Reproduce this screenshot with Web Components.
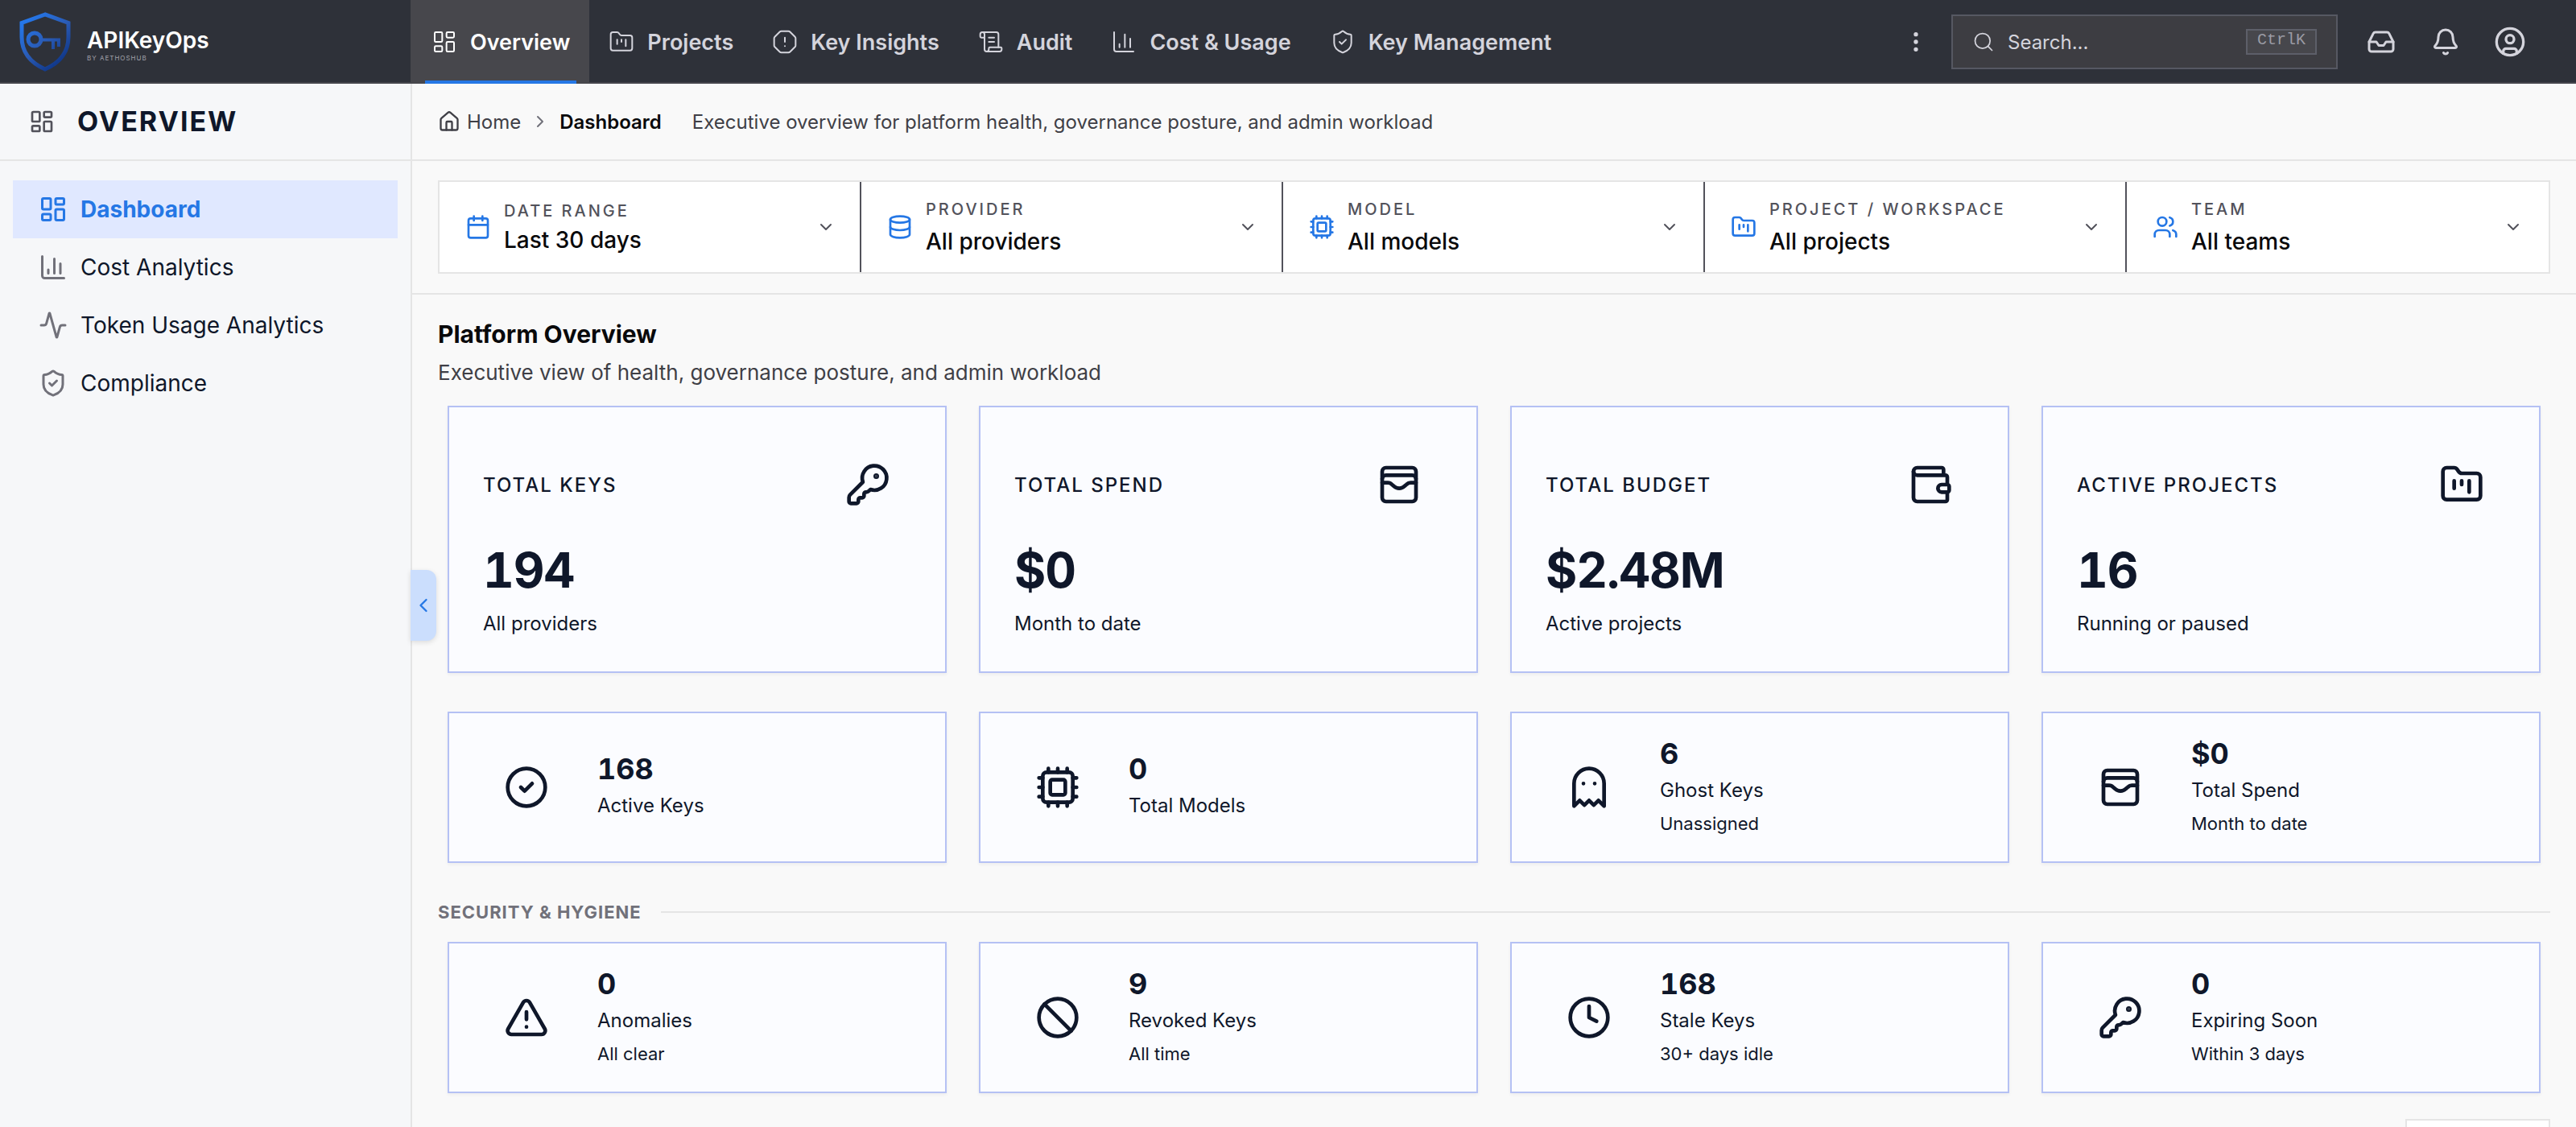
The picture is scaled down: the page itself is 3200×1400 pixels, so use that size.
<!DOCTYPE html>
<html lang="en">
<head>
<meta charset="utf-8">
<title>APIKeyOps - Overview</title>
<style>
  :root {
    --blue: #2577e5;
    --ink: #0f172a;
    --line: #e5e5e5;
    --muted: #71717a;
    --text: #3f3f46;
  }
  body {
    margin: 0;
    height: 100vh;
    overflow: hidden;
    background: #f9f9f9;
    color: var(--ink);
    font-family: Inter, "Liberation Sans", sans-serif;
    font-size: 24px;
  }
</style>
</head>
<body>
<ops-app></ops-app>

<script>
const ICONS = {
  dashboard: '<rect width="7" height="9" x="3" y="3" rx="1"/><rect width="7" height="5" x="14" y="3" rx="1"/><rect width="7" height="9" x="14" y="12" rx="1"/><rect width="7" height="5" x="3" y="16" rx="1"/>',
  folder: '<path d="M4 20h16a2 2 0 0 0 2-2V8a2 2 0 0 0-2-2h-7.93a2 2 0 0 1-1.66-.9l-.82-1.2A2 2 0 0 0 7.93 3H4a2 2 0 0 0-2 2v13c0 1.1.9 2 2 2Z"/><path d="M8 10v4M12 10v2M16 10v6"/>',
  octagon: '<path d="M12 16h.01M12 8v4"/><path d="M15.312 2a2 2 0 0 1 1.414.586l4.688 4.688A2 2 0 0 1 22 8.688v6.624a2 2 0 0 1-.586 1.414l-4.688 4.688a2 2 0 0 1-1.414.586H8.688a2 2 0 0 1-1.414-.586l-4.688-4.688A2 2 0 0 1 2 15.312V8.688a2 2 0 0 1 .586-1.414l4.688-4.688A2 2 0 0 1 8.688 2z"/>',
  scroll: '<path d="M15 12h-5M15 8h-5M19 17V5a2 2 0 0 0-2-2H4"/><path d="M8 21h12a2 2 0 0 0 2-2v-1a1 1 0 0 0-1-1H11a1 1 0 0 0-1 1v1a2 2 0 1 1-4 0V5a2 2 0 1 0-4 0v2a1 1 0 0 0 1 1h3"/>',
  chart: '<path d="M3 3v16a2 2 0 0 0 2 2h16M18 17V9M13 17V5M8 17v-3"/>',
  shield: '<path d="M20 13c0 5-3.5 7.5-7.66 8.95a1 1 0 0 1-.67-.01C7.5 20.5 4 18 4 13V6a1 1 0 0 1 1-1c2 0 4.5-1.2 6.24-2.72a1.17 1.17 0 0 1 1.52 0C14.51 3.81 17 5 19 5a1 1 0 0 1 1 1z"/><path d="m9 12 2 2 4-4"/>',
  activity: '<path d="M22 12h-2.48a2 2 0 0 0-1.93 1.46l-2.35 8.36a.25.25 0 0 1-.48 0L9.24 2.18a.25.25 0 0 0-.48 0l-2.35 8.38A2 2 0 0 1 4.49 12H2"/>',
  dots: '<circle cx="12" cy="12" r="1"/><circle cx="12" cy="5" r="1"/><circle cx="12" cy="19" r="1"/>',
  search: '<circle cx="11" cy="11" r="8"/><path d="m21 21-4.34-4.34"/>',
  inbox: '<path d="M22 12h-6l-2 3h-4l-2-3H2"/><path d="M5.45 5.11 2 12v6a2 2 0 0 0 2 2h16a2 2 0 0 0 2-2v-6l-3.45-6.89A2 2 0 0 0 16.76 4H7.24a2 2 0 0 0-1.79 1.11z"/>',
  bell: '<path d="M10.268 21a2 2 0 0 0 3.464 0"/><path d="M3.262 15.326A1 1 0 0 0 4 17h16a1 1 0 0 0 .74-1.673C19.41 13.956 18 12.499 18 8A6 6 0 0 0 6 8c0 4.499-1.411 5.956-2.738 7.326"/>',
  user: '<circle cx="12" cy="12" r="10"/><circle cx="12" cy="10" r="3"/><path d="M7 20.662V19a2 2 0 0 1 2-2h6a2 2 0 0 1 2 2v1.662"/>',
  home: '<path d="M15 21v-8a1 1 0 0 0-1-1h-4a1 1 0 0 0-1 1v8"/><path d="M3 10a2 2 0 0 1 .709-1.528l7-5.999a2 2 0 0 1 2.582 0l7 5.999A2 2 0 0 1 21 10v9a2 2 0 0 1-2 2H5a2 2 0 0 1-2-2z"/>',
  right: '<path d="m9 18 6-6-6-6"/>',
  left: '<path d="m15 18-6-6 6-6"/>',
  down: '<path d="m6 9 6 6 6-6"/>',
  calendar: '<path d="M8 2v4M16 2v4M3 10h18"/><rect width="18" height="18" x="3" y="4" rx="2"/>',
  database: '<ellipse cx="12" cy="5" rx="9" ry="3"/><path d="M3 5V19A9 3 0 0 0 21 19V5"/><path d="M3 12A9 3 0 0 0 21 12"/>',
  cpu: '<path d="M12 20v2M12 2v2M17 20v2M17 2v2M2 12h2M2 17h2M2 7h2M20 12h2M20 17h2M20 7h2M7 20v2M7 2v2"/><rect x="4" y="4" width="16" height="16" rx="2"/><rect x="8" y="8" width="8" height="8" rx="1"/>',
  users: '<path d="M16 21v-2a4 4 0 0 0-4-4H6a4 4 0 0 0-4 4v2M16 3.128a4 4 0 0 1 0 7.744M22 21v-2a4 4 0 0 0-3-3.87"/><circle cx="9" cy="7" r="4"/>',
  key: '<path d="M2.586 17.414A2 2 0 0 0 2 18.828V21a1 1 0 0 0 1 1h3a1 1 0 0 0 1-1v-1a1 1 0 0 1 1-1h1a1 1 0 0 0 1-1v-1a1 1 0 0 1 1-1h.172a2 2 0 0 0 1.414-.586l.814-.814a6.5 6.5 0 1 0-4-4z"/><circle cx="16.5" cy="7.5" r=".5" fill="currentColor"/>',
  cards: '<rect width="18" height="18" x="3" y="3" rx="2"/><path d="M3 9a2 2 0 0 1 2-2h14a2 2 0 0 1 2 2"/><path d="M3 11h3c.8 0 1.6.3 2.1.9l1.1.9c1.6 1.6 4.1 1.6 5.7 0l1.1-.9c.5-.5 1.3-.9 2.1-.9H21"/>',
  wallet: '<path d="M19 7V4a1 1 0 0 0-1-1H5a2 2 0 0 0 0 4h15a1 1 0 0 1 1 1v4h-3a2 2 0 0 0 0 4h3a1 1 0 0 0 1-1v-2a1 1 0 0 0-1-1"/><path d="M3 5v14a2 2 0 0 0 2 2h15a1 1 0 0 0 1-1v-4"/>',
  check: '<circle cx="12" cy="12" r="10"/><path d="m9 12 2 2 4-4"/>',
  ghost: '<path d="M9 10h.01M15 10h.01"/><path d="M12 2a8 8 0 0 0-8 8v12l3-3 2.5 2.5L12 19l2.5 2.5L17 19l3 3V10a8 8 0 0 0-8-8z"/>',
  alert: '<path d="m21.73 18-8-14a2 2 0 0 0-3.48 0l-8 14A2 2 0 0 0 4 21h16a2 2 0 0 0 1.73-3"/><path d="M12 9v4M12 17h.01"/>',
  ban: '<circle cx="12" cy="12" r="10"/><path d="m4.9 4.9 14.2 14.2"/>',
  clock: '<circle cx="12" cy="12" r="10"/><path d="M12 6v6l4 2"/>',
};

// Base class: renders html() into an open shadow root
class OpsElement extends HTMLElement {
  connectedCallback() {
    if (this.shadowRoot) return;
    this.attachShadow({ mode: "open" }).innerHTML = this.html();
  }

  attr(name, fallback = "") {
    return this.getAttribute(name) ?? fallback;
  }
}

class OpsIcon extends OpsElement {
  html() {
    const size = this.attr("size", "32");
    return `
      <style>
        :host { display: inline-flex; flex-shrink: 0; }
        svg { display: block; }
      </style>
      <svg width="${size}" height="${size}" viewBox="0 0 24 24" fill="none" stroke="currentColor"
        stroke-width="${this.attr("stroke", "2")}" stroke-linecap="round" stroke-linejoin="round"
        aria-hidden="true">${ICONS[this.attr("name")]}</svg>
    `;
  }
}

class OpsBrand extends OpsElement {
  html() {
    return `
      <style>
        :host {
          display: flex;
          align-items: center;
          box-sizing: border-box;
          width: 512px;
          padding-left: 24px;
          gap: 20px;
          border-right: 2px solid #47474c;
          flex-shrink: 0;
        }
        .words { padding-top: 8px; }
        .name { color: #fff; font-size: 28px; font-weight: 600; line-height: 32px; }
        .by { color: #a1a1aa; font-size: 8px; line-height: 12px; letter-spacing: 1px; }
      </style>
      <svg width="64" height="74" viewBox="0 0 64 74" fill="none" aria-hidden="true">
        <defs>
          <linearGradient id="g" x1="0" y1="0" x2="64" y2="74" gradientUnits="userSpaceOnUse">
            <stop offset="0.1" stop-color="#2479ee"/>
            <stop offset="0.5" stop-color="#2a5bb5"/>
            <stop offset="0.8" stop-color="#123a8c"/>
          </linearGradient>
        </defs>
        <g stroke="url(#g)" stroke-width="5">
          <path d="M32 3 3 13.500V31c0 20 11 32 29 40 18-8 29-20 29-40V13.500Z"/>
          <circle cx="19" cy="34" r="8"/>
          <path d="M27 34.500H51M42 34v12M49 34v9" stroke-width="4"/>
        </g>
      </svg>
      <div class="words">
        <div class="name">APIKeyOps</div>
        <div class="by">BY AETHOSHUB</div>
      </div>
    `;
  }
}

class OpsNavItem extends OpsElement {
  html() {
    return `
      <style>
        :host { display: flex; }
        a {
          position: relative;
          display: flex;
          align-items: center;
          gap: 16px;
          padding: 0 24px;
          color: #d4d4dc;
          font-size: 27px;
          font-weight: 600;
          text-decoration: none;
          white-space: nowrap;
        }
        :host([active]) a { background: #47474c; color: #fff; }
        :host([active]) a::after {
          content: "";
          position: absolute;
          left: 16px;
          right: 16px;
          bottom: 0;
          height: 4px;
          background: var(--blue);
        }
      </style>
      <a href="#"><ops-icon name="${this.attr("icon")}" stroke="1.5"></ops-icon><slot></slot></a>
    `;
  }
}

class OpsHeader extends OpsElement {
  html() {
    return `
      <style>
        :host {
          display: flex;
          height: 104px;
          background: #2e3139;
          box-shadow: inset 0 -2px #45454c;
          color: #d4d4dc;
        }
        nav { display: flex; flex: 1; }
        .tools { display: flex; align-items: center; gap: 12px; padding-right: 48px; }
        .tools button {
          display: flex;
          align-items: center;
          justify-content: center;
          width: 68px;
          height: 68px;
          padding: 0;
          border: 0;
          background: none;
          color: inherit;
        }
        .tools .more { width: 64px; }
        .search {
          display: flex;
          align-items: center;
          box-sizing: border-box;
          width: 480px;
          height: 68px;
          gap: 16px;
          padding: 0 24px;
          margin-right: 8px;
          background: #3d3d42;
          border: 2px solid #565862;
        }
        input {
          flex: 1;
          min-width: 0;
          padding: 0;
          border: 0;
          outline: 0;
          background: none;
          color: inherit;
          font: inherit;
        }
        input::placeholder { color: #d4d4dc; opacity: 1; }
        kbd {
          box-sizing: border-box;
          height: 32px;
          padding: 0 12px;
          border: 2px solid #5d5f69;
          background: #47474c;
          color: #9a9ba4;
          font: 20px/24px "Liberation Mono", monospace;
        }
      </style>
      <ops-brand></ops-brand>
      <nav>
        <ops-nav-item icon="dashboard" active>Overview</ops-nav-item>
        <ops-nav-item icon="folder">Projects</ops-nav-item>
        <ops-nav-item icon="octagon">Key Insights</ops-nav-item>
        <ops-nav-item icon="scroll">Audit</ops-nav-item>
        <ops-nav-item icon="chart">Cost &amp; Usage</ops-nav-item>
        <ops-nav-item icon="shield">Key Management</ops-nav-item>
      </nav>
      <div class="tools">
        <button class="more" aria-label="More"><ops-icon name="dots"></ops-icon></button>
        <label class="search">
          <ops-icon name="search" size="28" stroke="1.5"></ops-icon>
          <input type="search" placeholder="Search..." aria-label="Search">
          <kbd>CtrlK</kbd>
        </label>
        <button aria-label="Inbox"><ops-icon name="inbox" size="36"></ops-icon></button>
        <button aria-label="Notifications"><ops-icon name="bell" size="36"></ops-icon></button>
        <button aria-label="Account"><ops-icon name="user" size="40"></ops-icon></button>
      </div>
    `;
  }
}

class OpsSideItem extends OpsElement {
  html() {
    return `
      <style>
        :host { display: block; }
        a {
          display: flex;
          align-items: center;
          height: 72px;
          gap: 16px;
          padding: 0 32px;
          color: var(--ink);
          font-size: 28px;
          text-decoration: none;
        }
        ops-icon { color: var(--muted); }
        :host([active]) a { background: #e0e8ff; font-weight: 700; }
        :host([active]) a, :host([active]) ops-icon { color: var(--blue); }
      </style>
      <a href="#"><ops-icon name="${this.attr("icon")}" size="36"></ops-icon><slot></slot></a>
    `;
  }
}

class OpsSidebar extends OpsElement {
  html() {
    return `
      <style>
        :host {
          position: relative;
          z-index: 1;
          display: block;
          box-sizing: border-box;
          width: 512px;
          flex-shrink: 0;
          background: #f6f7f9;
          border-right: 2px solid var(--line);
        }
        header {
          display: flex;
          align-items: center;
          box-sizing: border-box;
          height: 96px;
          gap: 28px;
          padding-left: 36px;
          border-bottom: 2px solid var(--line);
        }
        header ops-icon { color: #52525b; }
        h2 { margin: 0; font-size: 34px; font-weight: 700; line-height: 40px; letter-spacing: 2px; }
        nav { padding: 24px 16px; }
        /* Handle hangs over the edge of the sidebar */
        button {
          position: absolute;
          left: 100%;
          top: 604px;
          display: flex;
          align-items: center;
          justify-content: center;
          width: 32px;
          height: 88px;
          padding: 0;
          border: 0;
          border-radius: 0 12px 12px 0;
          background: #cbdefd;
          color: var(--blue);
          box-shadow: 0 2px 6px rgba(0, 0, 0, 0.12);
        }
      </style>
      <header><ops-icon name="dashboard"></ops-icon><h2>OVERVIEW</h2></header>
      <nav>
        <ops-side-item icon="dashboard" active>Dashboard</ops-side-item>
        <ops-side-item icon="chart">Cost Analytics</ops-side-item>
        <ops-side-item icon="activity">Token Usage Analytics</ops-side-item>
        <ops-side-item icon="shield">Compliance</ops-side-item>
      </nav>
      <button aria-label="Collapse sidebar"><ops-icon name="left" size="28"></ops-icon></button>
    `;
  }
}

class OpsBreadcrumb extends OpsElement {
  html() {
    return `
      <style>
        :host {
          display: flex;
          align-items: center;
          box-sizing: border-box;
          height: 96px;
          padding: 0 32px;
          border-bottom: 2px solid var(--line);
          color: var(--text);
        }
        nav { display: flex; align-items: center; gap: 12px; }
        a { display: flex; align-items: center; gap: 8px; color: inherit; text-decoration: none; }
        nav > ops-icon { color: var(--muted); }
        strong { color: #09090b; font-weight: 600; }
        p { margin: 0 0 0 38px; }
      </style>
      <nav>
        <a href="#"><ops-icon name="home" size="28"></ops-icon>Home</a>
        <ops-icon name="right" size="24"></ops-icon>
        <strong>Dashboard</strong>
      </nav>
      <p>Executive overview for platform health, governance posture, and admin workload</p>
    `;
  }
}

class OpsFilter extends OpsElement {
  html() {
    return `
      <style>
        :host {
          display: flex;
          align-items: center;
          min-width: 0;
          height: 112px;
          box-sizing: border-box;
          gap: 16px;
          padding: 0 30px 0 32px;
          border-right: 2px solid #52525b;
        }
        :host(:last-child) { border-right-color: transparent; }
        .icon { color: var(--blue); }
        .arrow { color: #52525b; }
        .field { display: flex; flex-direction: column; flex: 1; min-width: 0; gap: 8px; }
        :host([compact]) .field { gap: 4px; }
        label {
          color: #52525b;
          font-size: 20px;
          font-weight: 500;
          line-height: 28px;
          letter-spacing: 3px;
          text-transform: uppercase;
        }
        select {
          appearance: none;
          height: 36px;
          padding: 0;
          border: 0;
          outline: 0;
          background: none;
          color: #09090b;
          font: 500 28px/36px Inter, "Liberation Sans", sans-serif;
        }
      </style>
      <ops-icon class="icon" name="${this.attr("icon")}"></ops-icon>
      <div class="field">
        <label for="value">${this.attr("label")}</label>
        <select id="value"><option>${this.attr("value")}</option></select>
      </div>
      <ops-icon class="arrow" name="down" size="24"></ops-icon>
    `;
  }
}

class OpsFilterBar extends OpsElement {
  html() {
    return `
      <style>
        :host { display: block; padding: 24px 32px; border-bottom: 2px solid var(--line); }
        div {
          display: grid;
          grid-template-columns: repeat(5, minmax(0, 1fr));
          background: #fff;
          border: 2px solid var(--line);
        }
      </style>
      <div><slot></slot></div>
    `;
  }
}

const cardBox = `
  :host {
    box-sizing: border-box;
    background: #fbfcff;
    border: 2px solid #b5c1f4;
    box-shadow: 0 2px 4px rgba(0, 0, 0, 0.05);
    color: var(--ink);
  }
`;

class OpsMetricCard extends OpsElement {
  html() {
    return `
      <style>
        ${cardBox}
        :host { display: block; padding: 68px 68px 42px 42px; }
        header { display: flex; align-items: center; justify-content: space-between; }
        h3 {
          margin: 0;
          font-size: 24px;
          font-weight: 500;
          letter-spacing: 2px;
          text-transform: uppercase;
        }
        .value {
          margin-top: 44px;
          font-size: 60px;
          font-weight: 700;
          font-variant-numeric: tabular-nums;
          line-height: 68px;
          letter-spacing: -1px;
        }
        .note { margin-top: 16px; line-height: 34px; }
      </style>
      <header><h3>${this.attr("label")}</h3><ops-icon name="${this.attr("icon")}" size="56"></ops-icon></header>
      <div class="value">${this.attr("value")}</div>
      <div class="note">${this.attr("note")}</div>
    `;
  }
}

class OpsStatCard extends OpsElement {
  html() {
    const note = this.attr("note");
    return `
      <style>
        ${cardBox}
        :host { display: flex; align-items: center; height: 188px; gap: 60px; padding: 0 68px; }
        .value {
          font-size: 36px;
          font-weight: 700;
          font-variant-numeric: tabular-nums;
          line-height: 40px;
        }
        .label { margin-top: 6px; line-height: 40px; }
        .note { margin-top: 4px; font-size: 22px; line-height: 34px; }
      </style>
      <ops-icon name="${this.attr("icon")}" size="56"></ops-icon>
      <div>
        <div class="value">${this.attr("value")}</div>
        <div class="label">${this.attr("label")}</div>
        ${note && `<div class="note">${note}</div>`}
      </div>
    `;
  }
}

class OpsGrid extends OpsElement {
  html() {
    return `
      <style>
        :host {
          display: grid;
          grid-template-columns: repeat(4, minmax(0, 1fr));
          gap: 48px 40px;
          padding: 0 12px;
        }
      </style>
      <slot></slot>
    `;
  }
}

class OpsSectionTitle extends OpsElement {
  html() {
    return `
      <style>
        :host { display: flex; align-items: center; gap: 24px; margin: 44px 0 20px; }
        h2 {
          margin: 0;
          color: var(--muted);
          font-size: 22px;
          font-weight: 700;
          line-height: 34px;
          letter-spacing: 1px;
          text-transform: uppercase;
        }
        :host::after { content: ""; flex: 1; height: 2px; background: var(--line); }
      </style>
      <h2><slot></slot></h2>
    `;
  }
}

class OpsApp extends OpsElement {
  html() {
    return `
      <style>
        :host { display: flex; flex-direction: column; height: 100vh; }
        .body { display: flex; flex: 1; min-height: 0; }
        main { flex: 1; min-width: 0; overflow: hidden; }
        .content { padding: 28px 32px 0; }
        h1 { margin: 0; color: #09090b; font-size: 30px; font-weight: 700; line-height: 42px; }
        .lead { margin: 8px 0 22px; color: var(--text); font-size: 26px; line-height: 38px; }
        .action {
          display: block;
          width: 180px;
          height: 64px;
          margin: 32px 0 0 auto;
          background: #fff;
          border: 2px solid var(--line);
        }
      </style>
      <ops-header></ops-header>
      <div class="body">
        <ops-sidebar></ops-sidebar>
        <main>
          <ops-breadcrumb></ops-breadcrumb>
          <ops-filter-bar>
            <ops-filter compact icon="calendar" label="Date Range" value="Last 30 days"></ops-filter>
            <ops-filter icon="database" label="Provider" value="All providers"></ops-filter>
            <ops-filter icon="cpu" label="Model" value="All models"></ops-filter>
            <ops-filter icon="folder" label="Project / Workspace" value="All projects"></ops-filter>
            <ops-filter icon="users" label="Team" value="All teams"></ops-filter>
          </ops-filter-bar>
          <div class="content">
            <h1>Platform Overview</h1>
            <p class="lead">Executive view of health, governance posture, and admin workload</p>
            <ops-grid>
              <ops-metric-card icon="key" label="Total Keys" value="194" note="All providers"></ops-metric-card>
              <ops-metric-card icon="cards" label="Total Spend" value="$0" note="Month to date"></ops-metric-card>
              <ops-metric-card icon="wallet" label="Total Budget" value="$2.48M" note="Active projects"></ops-metric-card>
              <ops-metric-card icon="folder" label="Active Projects" value="16" note="Running or paused"></ops-metric-card>
              <ops-stat-card icon="check" label="Active Keys" value="168"></ops-stat-card>
              <ops-stat-card icon="cpu" label="Total Models" value="0"></ops-stat-card>
              <ops-stat-card icon="ghost" label="Ghost Keys" value="6" note="Unassigned"></ops-stat-card>
              <ops-stat-card icon="cards" label="Total Spend" value="$0" note="Month to date"></ops-stat-card>
            </ops-grid>
            <ops-section-title>Security &amp; Hygiene</ops-section-title>
            <ops-grid>
              <ops-stat-card icon="alert" label="Anomalies" value="0" note="All clear"></ops-stat-card>
              <ops-stat-card icon="ban" label="Revoked Keys" value="9" note="All time"></ops-stat-card>
              <ops-stat-card icon="clock" label="Stale Keys" value="168" note="30+ days idle"></ops-stat-card>
              <ops-stat-card icon="key" label="Expiring Soon" value="0" note="Within 3 days"></ops-stat-card>
            </ops-grid>
            <button class="action" aria-label="Actions"></button>
          </div>
        </main>
      </div>
    `;
  }
}

customElements.define("ops-icon", OpsIcon);
customElements.define("ops-brand", OpsBrand);
customElements.define("ops-nav-item", OpsNavItem);
customElements.define("ops-header", OpsHeader);
customElements.define("ops-side-item", OpsSideItem);
customElements.define("ops-sidebar", OpsSidebar);
customElements.define("ops-breadcrumb", OpsBreadcrumb);
customElements.define("ops-filter", OpsFilter);
customElements.define("ops-filter-bar", OpsFilterBar);
customElements.define("ops-metric-card", OpsMetricCard);
customElements.define("ops-stat-card", OpsStatCard);
customElements.define("ops-grid", OpsGrid);
customElements.define("ops-section-title", OpsSectionTitle);
customElements.define("ops-app", OpsApp);
</script>
</body>
</html>
